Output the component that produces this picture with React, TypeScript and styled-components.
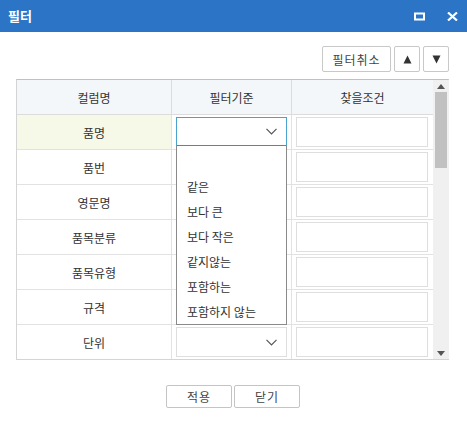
import React from "react";
import styled, { createGlobalStyle } from "styled-components";

const GlobalStyle = createGlobalStyle`
  html, body {
    margin: 0;
    padding: 0;
    background: #fff;
  }
  body {
    font-family: "Noto Sans CJK KR", "Noto Sans", sans-serif;
    font-size: 12px;
    color: #333;
  }
`;

const Window = styled.div`
  width: 467px;
  height: 432px;
  display: flex;
  flex-direction: column;
  background: #fff;
`;

const TitleBar = styled.div`
  height: 32px;
  background: #2b74c6;
  display: flex;
  align-items: center;
  padding: 0 9px 0 8px;
  color: #fff;
`;

const Title = styled.div`
  flex: 1;
  font-size: 13px;
  font-weight: bold;
  line-height: 32px;
`;

const TitleActions = styled.div`
  display: flex;
  align-items: center;
  gap: 22px;
`;

const TitleIcon = styled.span`
  width: 11px;
  height: 9px;
  display: block;

  svg {
    display: block;
  }
`;

const Body = styled.div`
  flex: 1;
  display: flex;
  flex-direction: column;
  padding: 14px 18px 0 16px;
`;

const Toolbar = styled.div`
  display: flex;
  justify-content: flex-end;
  gap: 3px;
  margin-bottom: 7px;
`;

const ToolButton = styled.button<{ $w: number }>`
  width: ${(p) => p.$w}px;
  height: 26px;
  border: 1px solid #c8c8c8;
  border-radius: 2px;
  background: #fff;
  font-family: inherit;
  font-size: 12px;
  color: #444;
  padding: 0;
  display: flex;
  align-items: center;
  justify-content: center;
  letter-spacing: 1px;
`;

const Grid = styled.div`
  width: 433px;
  box-sizing: border-box;
  border: 1px solid #d4d4d4;
  border-top-color: #9ccbe3;
  display: flex;
`;

const Table = styled.div`
  flex: 1;
  display: grid;
  grid-template-columns: 155px 120px 141px;
  position: relative;
`;

const HeadCell = styled.div<{ $last?: boolean }>`
  height: 34px;
  background: #f3f7fa;
  border-bottom: 1px solid #dcdcdc;
  border-right: ${(p) => (p.$last ? "0" : "1px solid #dcdcdc")};
  display: flex;
  align-items: center;
  justify-content: center;
  font-size: 12px;
  color: #333;
`;

const Cell = styled.div<{ $hl?: boolean; $center?: boolean; $last?: boolean; $bottom?: boolean }>`
  height: 34px;
  box-sizing: content-box;
  background: ${(p) => (p.$hl ? "#f6f9e8" : "#fff")};
  border-bottom: ${(p) => (p.$bottom ? "0" : "1px solid #e2e2e2")};
  border-right: ${(p) => (p.$last ? "0" : "1px solid #e2e2e2")};
  display: flex;
  align-items: center;
  justify-content: ${(p) => (p.$center ? "center" : "flex-start")};
  padding: 0 4px 0 4px;
  font-size: 12px;
  color: #333;
`;

const Select = styled.div<{ $focus?: boolean }>`
  width: 111px;
  height: 30px;
  box-sizing: border-box;
  border: 1px solid ${(p) => (p.$focus ? "#4aa3cf" : "#dedede")};
  border-bottom: ${(p) => (p.$focus ? "2px solid #3d8fb8" : "1px solid #dedede")};
  background: #fff;
  display: flex;
  align-items: center;
  justify-content: flex-end;
  padding-right: 9px;
  position: relative;
`;

const Input = styled.div`
  width: 132px;
  height: 30px;
  box-sizing: border-box;
  border: 1px solid #dedede;
  background: #fff;
`;

const Dropdown = styled.ul`
  position: absolute;
  left: -1px;
  top: 28px;
  width: 111px;
  box-sizing: border-box;
  margin: 0;
  padding: 3px 0 0;
  list-style: none;
  background: #fff;
  border: 1px solid #8a8a8a;
  border-top: 0;
  z-index: 2;
`;

const Option = styled.li`
  height: 25px;
  line-height: 25px;
  padding-left: 10px;
  font-size: 12px;
  color: #333;
  white-space: nowrap;
`;

const ScrollBar = styled.div`
  width: 16px;
  background: #f0f0f0;
  display: flex;
  flex-direction: column;
  align-items: center;
`;

const ScrollArrow = styled.div`
  height: 12px;
  width: 16px;
  display: flex;
  align-items: center;
  justify-content: center;
`;

const Thumb = styled.div`
  width: 12px;
  height: 76px;
  background: #c1c1c1;
`;

const Spacer = styled.div`
  flex: 1;
`;

const Footer = styled.div`
  display: flex;
  justify-content: center;
  gap: 2px;
  margin-top: 25px;
  padding-left: 1px;
`;

const FooterButton = styled.button`
  width: 66px;
  height: 23px;
  border: 1px solid #c4c4c4;
  border-radius: 2px;
  background: #fff;
  font-family: inherit;
  font-size: 12px;
  color: #444;
  padding: 0;
  letter-spacing: 1px;
`;

const Chevron = () => (
  <svg width="11" height="7" viewBox="0 0 11 7">
    <polyline points="0.5,0.8 5.5,5.8 10.5,0.8" fill="none" stroke="#555" strokeWidth="1.2" />
  </svg>
);

const rows = ["품명", "품번", "영문명", "품목분류", "품목유형", "규격", "단위"];
const options = ["", "같은", "보다 큰", "보다 작은", "같지않는", "포함하는", "포함하지 않는"];

export default function App() {
  return (
    <>
      <GlobalStyle />
      <Window>
        <TitleBar>
          <Title>필터</Title>
          <TitleActions>
            <TitleIcon>
              <svg width="11" height="9" viewBox="0 0 11 9">
                <rect x="1" y="1.5" width="9" height="6" fill="none" stroke="#fff" strokeWidth="2" />
              </svg>
            </TitleIcon>
            <TitleIcon>
              <svg width="11" height="9" viewBox="0 0 11 9">
                <path d="M1 0.5 L10 8.5 M10 0.5 L1 8.5" stroke="#fff" strokeWidth="2.2" />
              </svg>
            </TitleIcon>
          </TitleActions>
        </TitleBar>
        <Body>
          <Toolbar>
            <ToolButton $w={69}>필터취소</ToolButton>
            <ToolButton $w={26}>
              <svg width="9" height="9" viewBox="0 0 9 9">
                <polygon points="4.5,0.5 8.5,8.5 0.5,8.5" fill="#333" />
              </svg>
            </ToolButton>
            <ToolButton $w={26}>
              <svg width="9" height="9" viewBox="0 0 9 9">
                <polygon points="0.5,0.5 8.5,0.5 4.5,8.5" fill="#333" />
              </svg>
            </ToolButton>
          </Toolbar>
          <Grid>
            <Table>
              <HeadCell>컬럼명</HeadCell>
              <HeadCell>필터기준</HeadCell>
              <HeadCell $last>찾을조건</HeadCell>
              {rows.map((name, i) => {
                const last = i === rows.length - 1;
                return (
                  <React.Fragment key={name}>
                    <Cell $center $hl={i === 0} $bottom={last}>
                      {name}
                    </Cell>
                    <Cell $bottom={last}>
                      {(i === 0 || last) && (
                        <Select $focus={i === 0}>
                          <Chevron />
                          {i === 0 && (
                            <Dropdown>
                              {options.map((o, k) => (
                                <Option key={k}>{o}</Option>
                              ))}
                            </Dropdown>
                          )}
                        </Select>
                      )}
                    </Cell>
                    <Cell $last $bottom={last}>
                      <Input />
                    </Cell>
                  </React.Fragment>
                );
              })}
            </Table>
            <ScrollBar>
              <ScrollArrow>
                <svg width="8" height="5" viewBox="0 0 8 5">
                  <polygon points="4,0 8,5 0,5" fill="#555" />
                </svg>
              </ScrollArrow>
              <Thumb />
              <Spacer />
              <ScrollArrow>
                <svg width="8" height="5" viewBox="0 0 8 5">
                  <polygon points="0,0 8,0 4,5" fill="#555" />
                </svg>
              </ScrollArrow>
            </ScrollBar>
          </Grid>
          <Footer>
            <FooterButton>적용</FooterButton>
            <FooterButton>닫기</FooterButton>
          </Footer>
        </Body>
      </Window>
    </>
  );
}
